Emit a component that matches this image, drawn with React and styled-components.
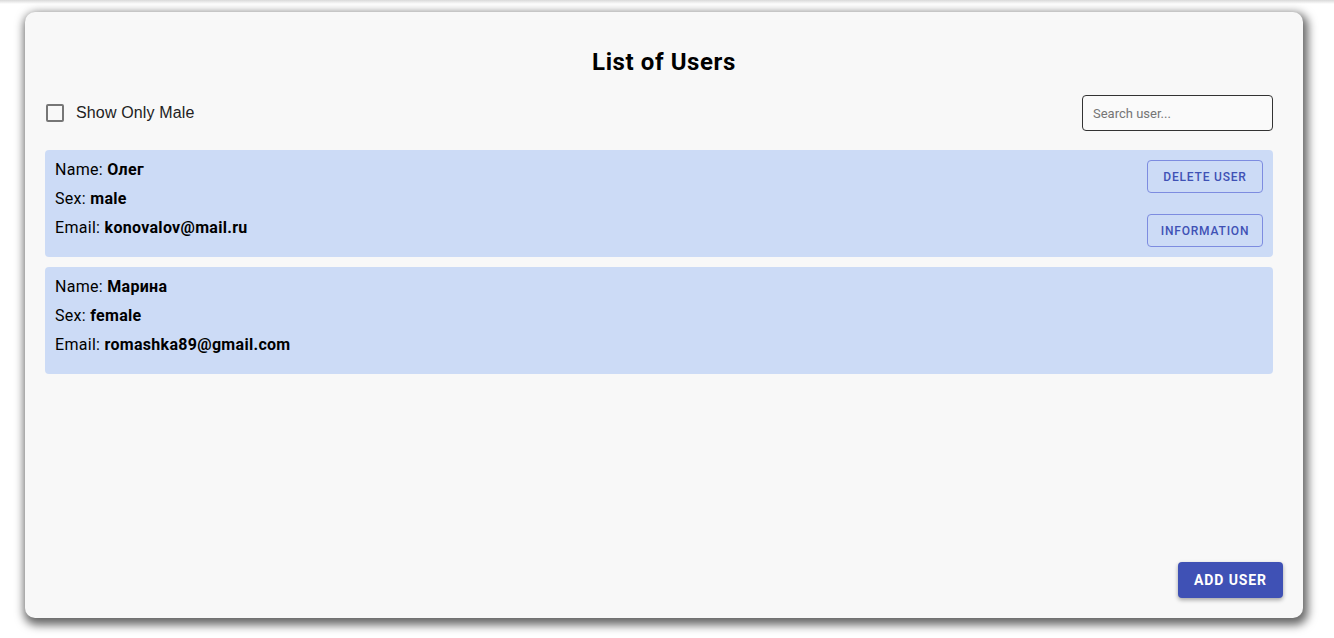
import React, { useState } from 'react'
import styled, { createGlobalStyle } from 'styled-components'

const users = [
  { id: 1, name: 'Олег', sex: 'male', email: 'konovalov@mail.ru', active: true },
  { id: 2, name: 'Марина', sex: 'female', email: 'romashka89@gmail.com' }
]

const App = () => {
  const [onlyMale, setOnlyMale] = useState(false)
  const [search, setSearch] = useState('')

  return (
    <>
      <GlobalStyle />
      <Page>
        <Card>
          <Title>List of Users</Title>
          <Toolbar>
            <CheckLabel>
              <CheckBox
                type='checkbox'
                checked={onlyMale}
                onChange={e => setOnlyMale(e.target.checked)}
              />
              Show Only Male
            </CheckLabel>
            <Search
              type='text'
              placeholder='Search user...'
              value={search}
              onChange={e => setSearch(e.target.value)}
            />
          </Toolbar>
          <List>
            {users.map(user => (
              <UserItem key={user.id}>
                <Info>
                  <Line>
                    Name: <b>{user.name}</b>
                  </Line>
                  <Line>
                    Sex: <b>{user.sex}</b>
                  </Line>
                  <Line>
                    Email: <b>{user.email}</b>
                  </Line>
                </Info>
                {user.active && (
                  <Actions>
                    <OutlineBtn>Delete user</OutlineBtn>
                    <OutlineBtn>Information</OutlineBtn>
                  </Actions>
                )}
              </UserItem>
            ))}
          </List>
          <AddBtn>Add user</AddBtn>
        </Card>
      </Page>
    </>
  )
}

const GlobalStyle = createGlobalStyle`
  html, body {
    margin: 0;
    height: 100%;
    background: linear-gradient(#d9d9d9, #ffffff 4px);
    font-family: Roboto, 'Liberation Sans', sans-serif;
  }
`
const Page = styled.div`
  box-sizing: border-box;
  height: 638px;
  padding: 12px 31px 20px 25px;
`
const Card = styled.div`
  box-sizing: border-box;
  height: 606px;
  background-color: #f8f8f8;
  border-radius: 10px;
  box-shadow: 2px 4px 10px 3px rgba(0, 0, 0, 0.6);
  padding: 20px 30px 20px 20px;
  display: flex;
  flex-direction: column;
`
const Title = styled.h1`
  margin: 15px 0 0;
  line-height: 30px;
  font-size: 24px;
  font-weight: 700;
  letter-spacing: 0.6px;
  text-align: center;
  color: #000;
  padding-left: 10px;
`
const Toolbar = styled.div`
  margin-top: 18px;
  height: 36px;
  display: flex;
  align-items: center;
  justify-content: space-between;
`
const CheckLabel = styled.label`
  display: flex;
  align-items: center;
  gap: 12px;
  font-family: 'Liberation Sans', Arial, sans-serif;
  font-size: 16px;
  letter-spacing: 0.15px;
  color: #222;
  padding-left: 1px;
`
const CheckBox = styled.input`
  appearance: none;
  margin: 0;
  width: 18px;
  height: 18px;
  border: 2px solid #767676;
  border-radius: 2px;
  box-sizing: border-box;
  &:checked {
    background: #3f51b5;
    border-color: #3f51b5;
  }
`
const Search = styled.input`
  box-sizing: border-box;
  width: 191px;
  height: 36px;
  border: 1px solid #333;
  border-radius: 4px;
  background: #fafafa;
  padding: 0 10px;
  font-family: Roboto, sans-serif;
  font-size: 13px;
  outline: none;
  &::placeholder {
    color: #757575;
  }
`
const List = styled.div`
  margin-top: 19px;
  display: flex;
  flex-direction: column;
  gap: 10px;
`
const UserItem = styled.div`
  box-sizing: border-box;
  min-height: 107px;
  background-color: #ccdbf6;
  border-radius: 4px;
  padding: 5px 10px 10px;
  display: flex;
  justify-content: space-between;
`
const Info = styled.div`
  display: flex;
  flex-direction: column;
`
const Line = styled.div`
  line-height: 29px;
  font-size: 16px;
  letter-spacing: 0.3px;
  color: #000;
  b {
    font-weight: 700;
  }
`
const Actions = styled.div`
  padding-top: 5px;
  display: flex;
  flex-direction: column;
  gap: 21px;
`
const OutlineBtn = styled.button`
  box-sizing: border-box;
  width: 116px;
  height: 33px;
  background: transparent;
  border: 1px solid #7d8ce0;
  border-radius: 4px;
  color: #3f51b5;
  font-family: Roboto, sans-serif;
  font-size: 12px;
  font-weight: 500;
  letter-spacing: 0.8px;
  text-transform: uppercase;
  cursor: pointer;
`
const AddBtn = styled.button`
  margin-top: auto;
  margin-right: -10px;
  align-self: flex-end;
  width: 105px;
  height: 36px;
  background-color: #3f51b5;
  color: #fff;
  border: none;
  border-radius: 4px;
  box-shadow: 0 2px 4px rgba(0, 0, 0, 0.35);
  font-family: Roboto, sans-serif;
  font-size: 14px;
  font-weight: 700;
  letter-spacing: 0.9px;
  text-transform: uppercase;
  cursor: pointer;
`

export default App
